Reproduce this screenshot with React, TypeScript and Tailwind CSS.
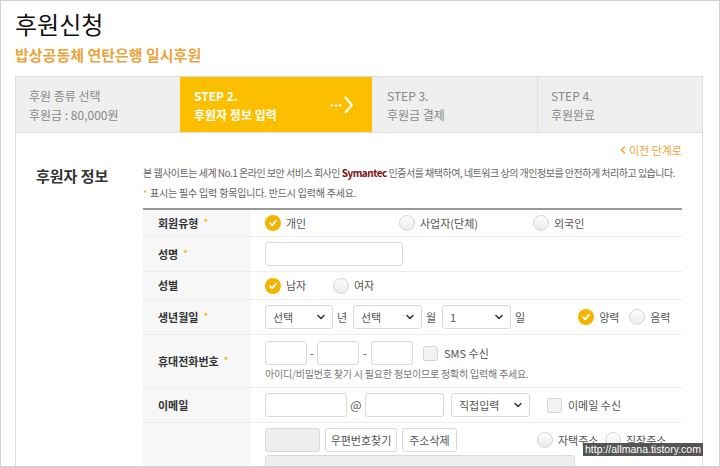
import React from 'react';
import { ChevronDown, ChevronLeft } from 'lucide-react';

const font = { fontFamily: '"Noto Sans CJK KR", "Noto Sans", sans-serif' };

const Checked = () => (
  <span className="inline-flex h-[16px] w-[16px] items-center justify-center rounded-full bg-[#f5b400]">
    <svg width="10" height="10" viewBox="0 0 10 10">
      <path d="M2 5.2 L4.2 7.4 L8 2.8" fill="none" stroke="#fff" strokeWidth="1.8" strokeLinecap="round" strokeLinejoin="round" />
    </svg>
  </span>
);

const Radio = () => (
  <span className="inline-block h-[16px] w-[16px] rounded-full border border-[#d6d6d6] bg-gradient-to-b from-[#fdfdfd] to-[#ececec]" />
);

const Check = () => (
  <span className="inline-block h-[15px] w-[15px] rounded-[2px] border border-[#d6d6d6] bg-[#f2f2f2]" />
);

const Input = ({ w }: { w: string }) => (
  <span className={`inline-block h-[24px] rounded-[3px] border border-[#d9d9d9] bg-white ${w}`} />
);

const Select = ({ w, label }: { w: string; label: string }) => (
  <span className={`inline-flex h-[24px] items-center justify-between rounded-[3px] border border-[#d9d9d9] bg-white pl-[7px] pr-[5px] text-[11px] text-[#555] ${w}`}>
    {label}
    <ChevronDown size={12} strokeWidth={3} className="text-[#333]" />
  </span>
);

const Star = () => <span className="ml-[5px] text-[9px] text-[#f5b400]">*</span>;

interface RowProps {
  label: string;
  required?: boolean;
  h: string;
  children: React.ReactNode;
}

const Row: React.FC<RowProps> = ({ label, required, h, children }) => (
  <div className={`grid grid-cols-[108px_1fr] border-b border-[#ececec] ${h}`}>
    <div className="flex items-center bg-[#f7f7f7] pl-[15px] text-[11px] font-bold text-[#333]">
      {label}
      {required && <Star />}
    </div>
    <div className="flex flex-col justify-center pl-[14px] text-[11px] text-[#555]">{children}</div>
  </div>
);

export default function App() {
  return (
    <div style={font} className="relative h-[467px] w-[720px] overflow-hidden border border-[#d0d0d0] bg-white">
      <div className="pl-[14px] pr-[16px] pt-[6px]">
        <h1 className="text-[24px] leading-[34px] text-[#111]">후원신청</h1>
        <p className="mt-[4px] text-[15px] font-bold leading-[20px] text-[#eba43a]">밥상공동체 연탄은행 일시후원</p>

        <div className="mt-[11px] flex h-[57px] border border-[#dedede] bg-[#efefef] text-[12px] leading-[19px]">
          <div className="flex w-[164px] flex-col justify-center pl-[13px] text-[#888]">
            <span>후원 종류 선택</span>
            <span>후원금 : 80,000원</span>
          </div>
          <div className="flex w-[192px] items-center justify-between bg-[#fcbf00] pl-[14px] pr-[16px] font-bold text-white">
            <div className="flex flex-col">
              <span>STEP 2.</span>
              <span>후원자 정보 입력</span>
            </div>
            <svg width="26" height="20" viewBox="0 0 26 20">
              <circle cx="2" cy="10.5" r="1.2" fill="#fff" />
              <circle cx="6" cy="10.5" r="1.2" fill="#fff" />
              <circle cx="10" cy="10.5" r="1.2" fill="#fff" />
              <path d="M15 2 L22 10 L15 18" fill="none" stroke="#fff" strokeWidth="2" />
            </svg>
          </div>
          <div className="flex w-[166px] flex-col justify-center border-r border-[#dedede] pl-[15px] text-[#888]">
            <span>STEP 3.</span>
            <span>후원금 결제</span>
          </div>
          <div className="flex flex-1 flex-col justify-center pl-[13px] text-[#888]">
            <span>STEP 4.</span>
            <span>후원완료</span>
          </div>
        </div>

        <div className="h-[400px] border-x border-[#dedede] pr-[20px]">
          <div className="flex justify-end pt-[9px]">
            <span className="flex items-center text-[11px] leading-[16px] text-[#eba43a]">
              <ChevronLeft size={12} strokeWidth={3} />
              이전 단계로
            </span>
          </div>
          <div className="mt-[5px] grid grid-cols-[127px_1fr]">
            <h2 className="pl-[20px] text-[15px] font-bold leading-[26px] text-[#333]">후원자 정보</h2>
            <div>
              <p className="whitespace-nowrap text-[10px] leading-[20px] tracking-[-0.5px] text-[#666]">
                본 웹사이트는 세계 No.1 온라인 보안 서비스 회사인{' '}
                <b className="text-[#7a1010]">Symantec</b> 인증서를 채택하여, 네트워크 상의 개인정보를 안전하게 처리하고 있습니다.
              </p>
              <p className="text-[10px] leading-[20px] tracking-[-0.2px] text-[#666]">
                <span className="mr-[3px] text-[9px] text-[#f5b400]">*</span>표시는 필수 입력 항목입니다. 반드시 입력해 주세요.
              </p>
              <div className="mt-[4px] border-t-2 border-[#999]">
                <Row label="회원유형" required h="h-[27px]">
                  <div className="flex items-center">
                    <span className="flex w-[134px] items-center gap-[5px]"><Checked />개인</span>
                    <span className="flex w-[134px] items-center gap-[5px]"><Radio />사업자(단체)</span>
                    <span className="flex items-center gap-[5px]"><Radio />외국인</span>
                  </div>
                </Row>
                <Row label="성명" required h="h-[35px]">
                  <Input w="w-[138px]" />
                </Row>
                <Row label="성별" h="h-[28px]">
                  <div className="flex items-center">
                    <span className="flex w-[68px] items-center gap-[5px]"><Checked />남자</span>
                    <span className="flex items-center gap-[5px]"><Radio />여자</span>
                  </div>
                </Row>
                <Row label="생년월일" required h="h-[35px]">
                  <div className="flex items-center">
                    <Select w="w-[68px]" label="선택" />
                    <span className="ml-[4px] w-[16px]">년</span>
                    <Select w="w-[69px]" label="선택" />
                    <span className="ml-[4px] w-[16px]">월</span>
                    <Select w="w-[69px]" label="1" />
                    <span className="ml-[4px]">일</span>
                    <span className="ml-[53px] flex w-[51px] items-center gap-[5px]"><Checked />양력</span>
                    <span className="flex items-center gap-[5px]"><Radio />음력</span>
                  </div>
                </Row>
                <Row label="휴대전화번호" required h="h-[53px]">
                  <div className="flex items-center">
                    <Input w="w-[42px]" />
                    <span className="w-[10px] text-center">-</span>
                    <Input w="w-[42px]" />
                    <span className="w-[12px] text-center">-</span>
                    <Input w="w-[42px]" />
                    <span className="ml-[10px] flex items-center gap-[6px]"><Check />SMS 수신</span>
                  </div>
                  <p className="mt-[2px] text-[10px] leading-[14px] tracking-[-0.2px] text-[#777]">아이디/비밀번호 찾기 시 필요한 정보이므로 정확히 입력해 주세요.</p>
                </Row>
                <Row label="이메일" h="h-[35px]">
                  <div className="flex items-center">
                    <Input w="w-[82px]" />
                    <span className="w-[18px] text-center text-[12px]">@</span>
                    <Input w="w-[79px]" />
                    <span className="ml-[7px]"><Select w="w-[79px]" label="직접입력" /></span>
                    <span className="ml-[17px] flex items-center gap-[6px]"><Check />이메일 수신</span>
                  </div>
                </Row>
                <div className="grid h-[60px] grid-cols-[108px_1fr]">
                  <div className="bg-[#f7f7f7]" />
                  <div className="pl-[14px] pt-[5px] text-[11px] text-[#555]">
                    <div className="flex items-center">
                      <span className="inline-block h-[24px] w-[55px] rounded-[3px] border border-[#d9d9d9] bg-[#efefef]" />
                      <span className="ml-[5px] flex h-[24px] w-[72px] items-center justify-center rounded-[3px] border border-[#d9d9d9] bg-white">우편번호찾기</span>
                      <span className="ml-[5px] flex h-[24px] w-[55px] items-center justify-center rounded-[3px] border border-[#d9d9d9] bg-white">주소삭제</span>
                      <span className="ml-[80px] flex w-[68px] items-center gap-[5px]"><Radio />자택주소</span>
                      <span className="flex items-center gap-[5px]"><Radio />직장주소</span>
                    </div>
                    <span className="mt-[3px] block h-[24px] w-[310px] rounded-[3px] border border-[#d9d9d9] bg-[#efefef]" />
                  </div>
                </div>
              </div>
            </div>
          </div>
        </div>
      </div>
      <span
        style={{ fontFamily: '"Liberation Sans", Arial, sans-serif' }}
        className="absolute left-[582px] top-[442px] bg-[#555] px-[2px] text-[10.5px] leading-[13px] text-white"
      >
        http://allmana.tistory.com
      </span>
    </div>
  );
}
